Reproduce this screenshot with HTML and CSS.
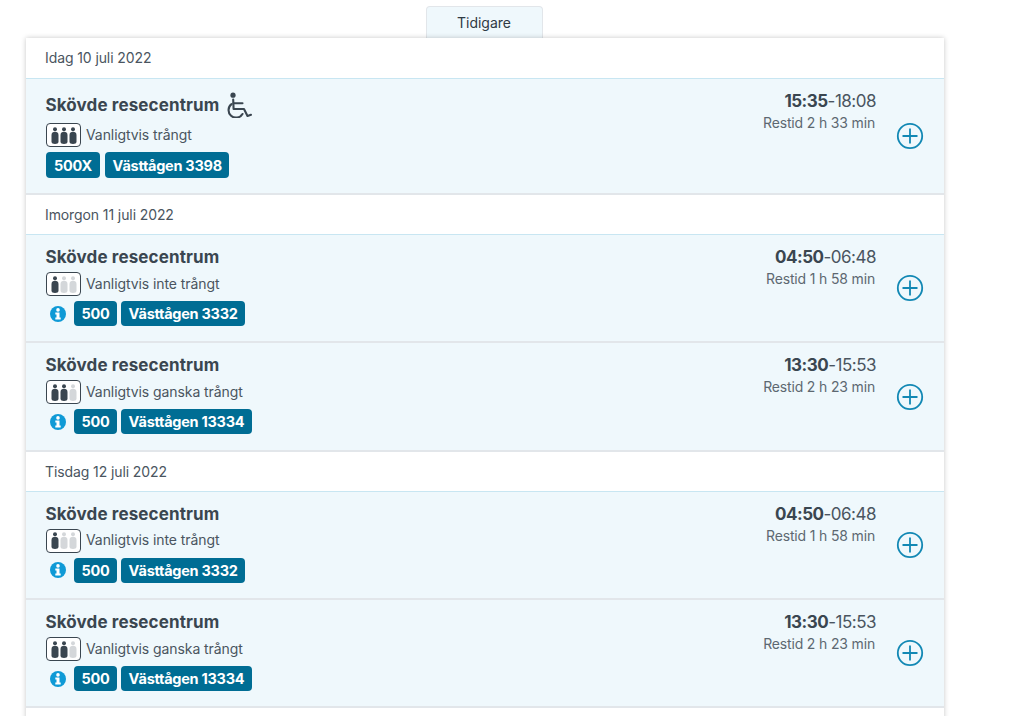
FILE: index.html
```html
<!DOCTYPE html>
<html lang="sv">
<head>
<meta charset="utf-8">
<title>Tidigare</title>
<link rel="stylesheet" href="styles.css">
</head>
<body>
<svg class="defs" width="0" height="0" aria-hidden="true">
  <defs>
    <symbol id="person" viewBox="0 0 8 17">
      <circle cx="4" cy="2.300" r="2"/>
      <path d="M.5 8C.5 6 2 4.800 4 4.800S7.500 6 7.500 8v6.500c0 1.800-1.500 2.500-3.500 2.500S.5 16.300.5 14.500z"/>
    </symbol>
    <symbol id="info" viewBox="0 0 16 16">
      <circle cx="8" cy="8" r="8" fill="#0f9ad6"/>
      <circle cx="8" cy="3.900" r="1.800" fill="#fff"/>
      <path d="M5.300 6.500h4.200v5.100h1.200v1.900H5.300v-1.900h1.200V8.400H5.300z" fill="#fff"/>
    </symbol>
    <symbol id="plus" viewBox="0 0 28 28">
      <circle cx="14" cy="14" r="12.200" fill="none" stroke="#1288b4" stroke-width="1.800"/>
      <path d="M14 6.500v15M6.500 14h15" fill="none" stroke="#1288b4" stroke-width="1.800"/>
    </symbol>
  </defs>
</svg>
<main class="page">
  <div class="tab-bar"><div class="tab">Tidigare</div></div>
  <section class="card">
    <h2 class="date date-first">Idag 10 juli 2022</h2>
    <article class="trip trip-first">
      <div class="info">
        <div class="title title-access">
          <span>Skövde resecentrum</span>
          <svg class="wheelchair" viewBox="0 0 25 26" fill="none" stroke="#3a4650" stroke-width="2.100" stroke-linecap="round" stroke-linejoin="round">
            <circle cx="6" cy="3.200" r="2.600" fill="#3a4650" stroke="none"/>
            <path d="M6.200 7.500l.4 9.500H17l3.500 7 3.500-1.200"/>
            <path d="M6.500 11.200h9"/>
            <path d="M4.500 12.200A7.500 7.500 0 1 0 15.500 22"/>
          </svg>
        </div>
        <div class="crowd">
          <span class="crowd-box">
            <svg class="p"><use href="#person"/></svg><svg class="p"><use href="#person"/></svg><svg class="p"><use href="#person"/></svg>
          </span>
          <span class="crowd-text">Vanligtvis trångt</span>
        </div>
        <div class="tags tags-tall"><span class="tag">500X</span><span class="tag">Västtågen 3398</span></div>
      </div>
      <div class="times"><div class="clock"><b>15:35</b>-18:08</div><div class="dur">Restid 2 h 33 min</div></div>
      <svg class="add"><use href="#plus"/></svg>
    </article>

    <h2 class="date">Imorgon 11 juli 2022</h2>
    <article class="trip">
      <div class="info">
        <div class="title">Skövde resecentrum</div>
        <div class="crowd">
          <span class="crowd-box"><svg class="p"><use href="#person"/></svg><svg class="p off"><use href="#person"/></svg><svg class="p off"><use href="#person"/></svg></span>
          <span class="crowd-text">Vanligtvis inte trångt</span>
        </div>
        <div class="tags"><svg class="i"><use href="#info"/></svg><span class="tag">500</span><span class="tag">Västtågen 3332</span></div>
      </div>
      <div class="times"><div class="clock"><b>04:50</b>-06:48</div><div class="dur">Restid 1 h 58 min</div></div>
      <svg class="add"><use href="#plus"/></svg>
    </article>
    <article class="trip">
      <div class="info">
        <div class="title">Skövde resecentrum</div>
        <div class="crowd">
          <span class="crowd-box"><svg class="p"><use href="#person"/></svg><svg class="p"><use href="#person"/></svg><svg class="p off"><use href="#person"/></svg></span>
          <span class="crowd-text">Vanligtvis ganska trångt</span>
        </div>
        <div class="tags"><svg class="i"><use href="#info"/></svg><span class="tag">500</span><span class="tag">Västtågen 13334</span></div>
      </div>
      <div class="times"><div class="clock"><b>13:30</b>-15:53</div><div class="dur">Restid 2 h 23 min</div></div>
      <svg class="add"><use href="#plus"/></svg>
    </article>

    <h2 class="date">Tisdag 12 juli 2022</h2>
    <article class="trip">
      <div class="info">
        <div class="title">Skövde resecentrum</div>
        <div class="crowd">
          <span class="crowd-box"><svg class="p"><use href="#person"/></svg><svg class="p off"><use href="#person"/></svg><svg class="p off"><use href="#person"/></svg></span>
          <span class="crowd-text">Vanligtvis inte trångt</span>
        </div>
        <div class="tags"><svg class="i"><use href="#info"/></svg><span class="tag">500</span><span class="tag">Västtågen 3332</span></div>
      </div>
      <div class="times"><div class="clock"><b>04:50</b>-06:48</div><div class="dur">Restid 1 h 58 min</div></div>
      <svg class="add"><use href="#plus"/></svg>
    </article>
    <article class="trip">
      <div class="info">
        <div class="title">Skövde resecentrum</div>
        <div class="crowd">
          <span class="crowd-box"><svg class="p"><use href="#person"/></svg><svg class="p"><use href="#person"/></svg><svg class="p off"><use href="#person"/></svg></span>
          <span class="crowd-text">Vanligtvis ganska trångt</span>
        </div>
        <div class="tags"><svg class="i"><use href="#info"/></svg><span class="tag">500</span><span class="tag">Västtågen 13334</span></div>
      </div>
      <div class="times"><div class="clock"><b>13:30</b>-15:53</div><div class="dur">Restid 2 h 23 min</div></div>
      <svg class="add"><use href="#plus"/></svg>
    </article>
    <div class="tail"></div>
  </section>
</main>
</body>
</html>
```

FILE: styles.css
```css
html, body {
  margin: 0;
  height: 716px;
  overflow: hidden;
  background: #fff;
}
body {
  font-family: Inter, "Liberation Sans", sans-serif;
  color: #3a4650;
}
.defs { position: absolute; }
.page {
  width: 918px;
  margin-left: 26px;
  padding-top: 6px;
}
.tab-bar {
  display: flex;
  justify-content: center;
  padding-right: 2px;
}
.tab {
  box-sizing: border-box;
  width: 117px;
  height: 32px;
  background: #eff8fc;
  border: 1px solid #e2e6ea;
  border-bottom: 0;
  border-radius: 4px 4px 0 0;
  font-size: 14px;
  line-height: 31px;
  text-align: center;
  color: #2f3a44;
}
.card {
  background: #fff;
  box-shadow: 0 0 5px rgba(0, 0, 0, .22);
  position: relative;
}
.date {
  margin: 0;
  height: 40.400px;
  box-sizing: border-box;
  padding-left: 19px;
  border-bottom: 1px solid #c8e6f2;
  font-size: 14px;
  font-weight: 400;
  line-height: 40px;
  letter-spacing: -.1px;
  color: #4a5560;
}
.date-first { height: 41px; }
.trip {
  display: flex;
  align-items: stretch;
  box-sizing: border-box;
  height: 108.100px;
  padding: 12px 0 0 20px;
  background: #eff8fc;
  border-bottom: 2px solid #e2e6ea;
}
.trip-first { height: 116px; }
.info { flex: 1; }
.title {
  font-size: 17px;
  font-weight: 700;
  line-height: 20px;
  letter-spacing: .12px;
  margin-left: -.5px;
  color: #3a4650;
}
.title-access {
  display: flex;
  align-items: center;
  gap: 8px;
  height: 27px;
}
.wheelchair { width: 25px; height: 26px; }
.crowd {
  display: flex;
  align-items: center;
  gap: 5px;
  height: 24px;
  margin-top: 5px;
  font-size: 14px;
  letter-spacing: -.08px;
  color: #4a5560;
}
.crowd-text { padding-bottom: 2px; }
.crowd-box {
  display: flex;
  justify-content: center;
  align-items: center;
  gap: 1px;
  box-sizing: border-box;
  width: 35px;
  height: 24px;
  background: #fff;
  border: 1px solid #3a4650;
  border-radius: 4px;
}
.p { width: 8px; height: 17px; fill: #3a4650; }
.p.off { fill: #d4d7da; }
.tags {
  display: flex;
  align-items: center;
  gap: 4px;
  height: 25px;
  margin-top: 5px;
}
.tags-tall { height: 26px; gap: 5px; }
.tag {
  display: flex;
  align-items: center;
  height: 100%;
  padding: 0 7.500px;
  background: #006d94;
  border-radius: 4px;
  color: #fff;
  font-size: 14.500px;
  font-weight: 700;
  letter-spacing: -.27px;
}
.tags-tall .tag:first-child { padding: 0 8px; }
.i { width: 16px; height: 16px; margin: 0 4px 0 4px; }
.times {
  width: 200px;
  text-align: right;
}
.clock {
  font-size: 17px;
  line-height: 20px;
  letter-spacing: -.5px;
  color: #4a5560;
}
.clock b { font-weight: 700; color: #3a4650; }
.dur {
  margin-top: 2px;
  padding-right: 1px;
  font-size: 14px;
  line-height: 20px;
  letter-spacing: -.16px;
  color: #5d6871;
}
.add {
  width: 28px;
  height: 28px;
  align-self: center;
  margin: 0 20px 0 20px;
  position: relative;
  top: -6px;
}
.tail { height: 30px; }
```
